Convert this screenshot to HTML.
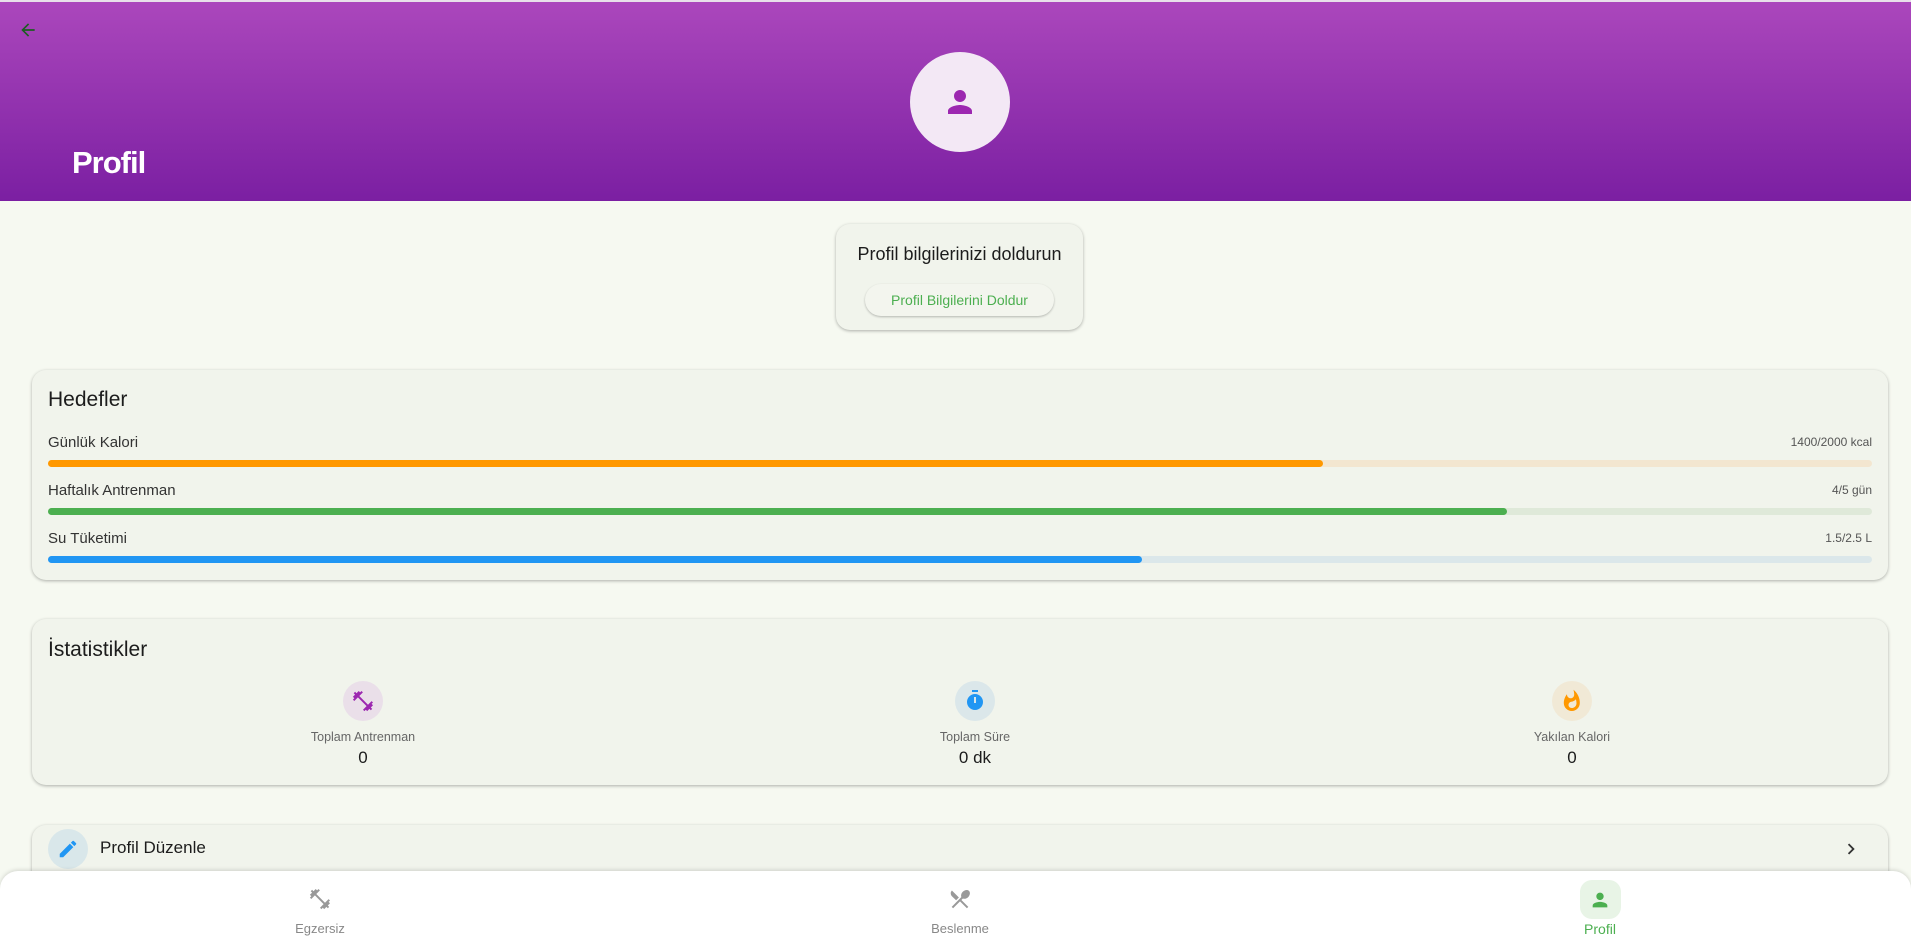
<!DOCTYPE html>
<html><head><meta charset="utf-8"><style>
*{box-sizing:border-box;margin:0;padding:0}
body{width:1911px;height:942px;overflow:hidden;background:#f6f9f1;font-family:"Liberation Sans",Roboto,sans-serif;position:relative;color:#1c1c1c}
.hdr{position:absolute;left:0;top:0;width:1911px;height:201px;background:linear-gradient(#ab47bc,#7b1fa2);border-top:2px solid #e8e0ea}
.back{position:absolute;left:18px;top:18px}
.av{position:absolute;left:910px;top:50px;width:100px;height:100px;border-radius:50%;background:#f3e8f5}
.ttl{position:absolute;left:72px;top:143px;font-size:31px;font-weight:bold;color:#fff;letter-spacing:-1px}
.card{position:absolute;background:#f1f4ec;border-radius:14px;box-shadow:0 1px 3px rgba(0,0,0,.3)}
.abs{position:absolute}
.bar{position:absolute;left:48px;width:1824px;height:7px;border-radius:4px}
.bar i{display:block;height:7px;border-radius:4px}
.lbl{position:absolute;left:48px;font-size:15px;color:#333}
.rt{position:absolute;right:39px;font-size:12px;color:#555}
.st{position:absolute;width:200px;text-align:center}
.ic{width:40px;height:40px;border-radius:50%;margin:0 auto;display:flex;align-items:center;justify-content:center}
.nav{position:absolute;left:0;top:871px;width:1911px;height:71px;background:#fff;border-radius:18px 18px 0 0;box-shadow:0 -1px 4px rgba(0,0,0,.15)}
.ni{position:absolute;width:120px;text-align:center;font-size:13px;color:#888}
</style></head><body>
<div class="hdr">
<svg class="back" width="20" height="20" viewBox="0 0 24 24"><path d="M20 11H7.8l5.6-5.6L12 4l-8 8 8 8 1.4-1.4L7.8 13H20z" fill="#1b5e20"/></svg>
<div class="av"><svg style="position:absolute;left:32px;top:32px" width="36" height="36" viewBox="0 0 24 24"><path d="M12 12c2.2 0 4-1.8 4-4s-1.8-4-4-4-4 1.8-4 4 1.8 4 4 4zm0 2c-2.7 0-8 1.3-8 4v2h16v-2c0-2.7-5.3-4-8-4z" fill="#9c27b0"/></svg></div>
<div class="ttl">Profil</div>
</div>

<div class="card" style="left:836px;top:224px;width:247px;height:106px">
<div class="abs" style="left:0;width:247px;top:20px;text-align:center;font-size:18px;color:#1c1c1c">Profil bilgilerinizi doldurun</div>
<div class="abs" style="left:29px;top:60px;width:189px;height:32px;border-radius:16px;background:#f3f5ee;box-shadow:0 1px 2px rgba(0,0,0,.25);text-align:center;line-height:32px;font-size:14px;color:#4caf50">Profil Bilgilerini Doldur</div>
</div>

<div class="card" style="left:32px;top:370px;width:1856px;height:210px">
<div class="abs" style="left:16px;top:18px;font-size:21px;color:#1c1c1c">Hedefler</div>
</div>
<div class="lbl" style="top:434px">Günlük Kalori</div><div class="rt" style="top:435px">1400/2000 kcal</div>
<div class="bar" style="top:460px;background:#f3e6d0"><i style="width:1275px;background:#ff9800"></i></div>
<div class="lbl" style="top:482px">Haftalık Antrenman</div><div class="rt" style="top:483px">4/5 gün</div>
<div class="bar" style="top:508px;background:#dfe9d9"><i style="width:1459px;background:#4caf50"></i></div>
<div class="lbl" style="top:530px">Su Tüketimi</div><div class="rt" style="top:531px">1.5/2.5 L</div>
<div class="bar" style="top:556px;background:#dbe7ea"><i style="width:1094px;background:#2196f3"></i></div>

<div class="card" style="left:32px;top:619px;width:1856px;height:166px">
<div class="abs" style="left:16px;top:19px;font-size:21px;color:#1c1c1c">İstatistikler</div>
</div>
<div class="st" style="left:263px;top:681px"><div class="ic" style="background:#eadfe9"><svg width="24" height="24" viewBox="0 0 24 24"><path d="M20.6 14.9L22 13.5 20.6 12.1 17 15.7 8.3 7 11.9 3.4 10.5 2 9.1 3.4 7.7 2 5.5 4.2 4.1 2.8 2.7 4.2 4.1 5.6 1.9 7.8 3.3 9.2 1.9 10.6 3.3 12 6.9 8.4 15.6 17.1 12 20.7 13.4 22.1 14.8 20.7 16.2 22.1 18.4 19.9 19.8 21.3 21.2 19.9 19.8 18.5 22 16.3z" fill="#9c27b0"/></svg></div><div style="font-size:12.5px;color:#666;margin-top:9px">Toplam Antrenman</div><div style="font-size:17px;margin-top:4px">0</div></div>
<div class="st" style="left:875px;top:681px"><div class="ic" style="background:#dbe7ea"><svg width="24" height="24" viewBox="0 0 24 24"><path d="M9 1h6v2H9zM12 5a8 8 0 1 0 0 16 8 8 0 0 0 0-16zm1 9h-2V8h2z" fill="#2196f3"/></svg></div><div style="font-size:12.5px;color:#666;margin-top:9px">Toplam Süre</div><div style="font-size:17px;margin-top:4px">0 dk</div></div>
<div class="st" style="left:1472px;top:681px"><div class="ic" style="background:#f1e9d6"><svg width="24" height="24" viewBox="0 0 24 24"><path d="M13.5.7s.7 2.6.7 4.8c0 2.1-1.4 3.8-3.5 3.8S7 7.6 7 5.5V5.2C5 7.6 3.8 10.7 3.8 14c0 4.4 3.6 8 8 8s8-3.6 8-8C19.9 8.6 17.3 3.8 13.5.7zM11.7 19c-1.8 0-3.2-1.4-3.200-3.1 0-1.6 1-2.8 2.8-3.1 1.8-.4 3.6-1.2 4.6-2.6.4 1.3.6 2.6.6 4 0 2.7-2.1 4.8-4.8 4.8z" fill="#ff9800"/></svg></div><div style="font-size:12.5px;color:#666;margin-top:9px">Yakılan Kalori</div><div style="font-size:17px;margin-top:4px">0</div></div>

<div class="card" style="left:32px;top:825px;width:1856px;height:80px"></div>
<div class="abs" style="left:48px;top:829px;width:40px;height:40px;border-radius:50%;background:#d9e7ea"><svg style="position:absolute;left:9px;top:9px" width="22" height="22" viewBox="0 0 24 24"><path d="M3 17.25V21h3.75L17.8 9.94l-3.75-3.75zM20.7 7.04a1 1 0 0 0 0-1.41l-2.34-2.34a1 1 0 0 0-1.41 0l-1.830 1.83 3.75 3.75z" fill="#2196f3"/></svg></div>
<div class="abs" style="left:100px;top:838px;font-size:17px;color:#1c1c1c">Profil Düzenle</div>
<svg class="abs" style="left:1840px;top:838px" width="22" height="22" viewBox="0 0 24 24"><path d="M10 6L8.6 7.4 13.2 12l-4.6 4.6L10 18l6-6z" fill="#333"/></svg>

<div class="nav">
<div class="ni" style="left:260px;top:16px"><svg width="24" height="24" viewBox="0 0 24 24"><path d="M20.6 14.9L22 13.5 20.6 12.1 17 15.7 8.3 7 11.9 3.4 10.5 2 9.1 3.4 7.7 2 5.5 4.2 4.1 2.8 2.7 4.2 4.1 5.6 1.9 7.8 3.3 9.2 1.9 10.6 3.3 12 6.9 8.4 15.6 17.1 12 20.7 13.4 22.1 14.8 20.7 16.2 22.1 18.4 19.9 19.8 21.3 21.2 19.9 19.8 18.5 22 16.3z" fill="#999"/></svg><div style="margin-top:7px">Egzersiz</div></div>
<div class="ni" style="left:900px;top:16px"><svg width="24" height="24" viewBox="0 0 24 24"><path d="M8.1 13.3l2.8-2.8L3.9 3.5a4 4 0 0 0 0 5.7zm6.8-1.8c1.5.7 3.7.2 5.3-1.4 1.9-1.9 2.3-4.7.8-6.2-1.5-1.5-4.2-1.1-6.2.8-1.6 1.6-2.1 3.8-1.4 5.3L3.7 19.9l1.4 1.4 6.9-6.9 6.9 6.9 1.4-1.4-6.9-6.9z" fill="#999"/></svg><div style="margin-top:7px">Beslenme</div></div>
<div class="ni" style="left:1540px;top:9px;color:#4caf50;font-size:14px"><div style="width:41px;height:39px;border-radius:12px;background:#e8f4e6;margin:0 auto;display:flex;align-items:center;justify-content:center"><svg width="22" height="22" viewBox="0 0 24 24"><path d="M12 12c2.2 0 4-1.8 4-4s-1.8-4-4-4-4 1.8-4 4 1.8 4 4 4zm0 2c-2.7 0-8 1.3-8 4v2h16v-2c0-2.7-5.3-4-8-4z" fill="#4caf50"/></svg></div><div style="margin-top:2px">Profil</div></div>
</div>
</body></html>
